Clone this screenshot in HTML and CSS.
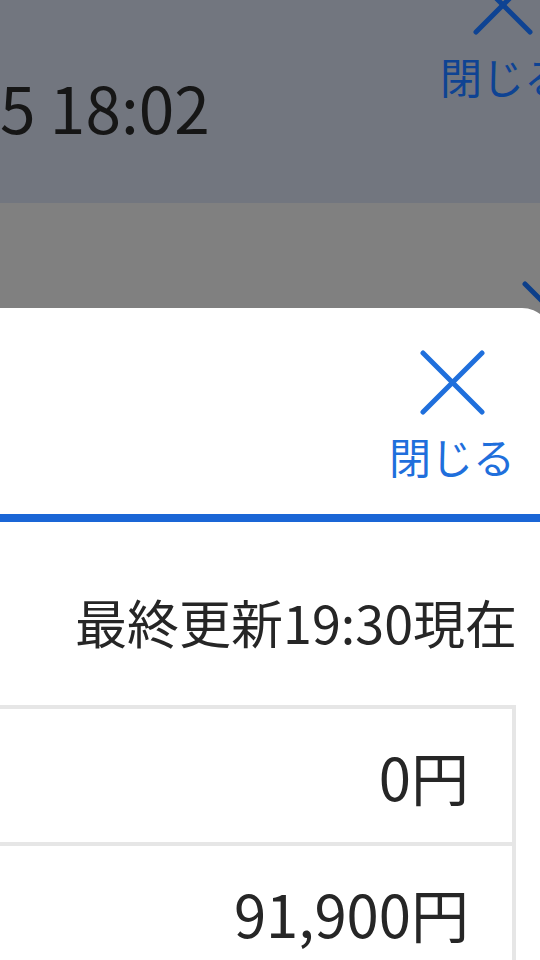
FILE: index.html
```html
<!DOCTYPE html>
<html lang="ja">
<head>
<meta charset="utf-8">
<title>最終更新</title>
<link rel="stylesheet" href="styles.css">
</head>
<body>
<div class="screen">
  <header class="backdrop-head">
    <div class="time">5 18:02</div>
    <div class="close close-dim">
      <svg class="x-icon x-dim" viewBox="0 0 60 60" aria-hidden="true">
        <line x1="3" y1="3" x2="57" y2="57"/>
        <line x1="57" y1="3" x2="3" y2="57"/>
      </svg>
      <span class="close-label">閉じる</span>
    </div>
  </header>
  <div class="backdrop-band">
    <svg class="chevron" viewBox="0 0 40 40" aria-hidden="true">
      <polyline points="3,3 22,22 41,3"/>
    </svg>
  </div>
  <section class="sheet">
    <div class="sheet-head">
      <div class="close">
        <svg class="x-icon" viewBox="0 0 65 65" aria-hidden="true">
          <line x1="3" y1="3" x2="62" y2="62"/>
          <line x1="62" y1="3" x2="3" y2="62"/>
        </svg>
        <span class="close-label">閉じる</span>
      </div>
    </div>
    <div class="bar"></div>
    <p class="updated">最終更新19:30現在</p>
    <div class="table">
      <div class="row"><span class="value">0円</span></div>
      <div class="row"><span class="value">91,900円</span></div>
    </div>
  </section>
</div>
</body>
</html>
```
FILE: styles.css
```css
* { box-sizing: border-box; }
html, body {
  margin: 0;
  padding: 0;
  width: 540px;
  height: 960px;
  overflow: hidden;
  background: #808080;
  font-family: "Noto Sans CJK JP", "Noto Sans", sans-serif;
}
.screen {
  width: 540px;
  height: 960px;
  overflow: hidden;
  display: flex;
  flex-direction: column;
}
.backdrop-head {
  height: 203px;
  flex: none;
  background: #72767f;
  display: flex;
  justify-content: space-between;
  align-items: flex-start;
}
.time {
  margin-top: 74px;
  font-size: 64px;
  line-height: 64px;
  color: #161616;
  white-space: nowrap;
}
.close {
  display: flex;
  flex-direction: column;
  align-items: center;
  gap: 20px;
  width: 126px;
}
.close-dim {
  margin-top: -25px;
  margin-right: -26px;
}
.x-icon {
  width: 65px;
  height: 65px;
  display: block;
  stroke: #1f6fdc;
  stroke-width: 5;
  stroke-linecap: round;
  fill: none;
}
.x-dim {
  width: 60px;
  height: 60px;
  stroke: #0e4393;
}
.close-label {
  font-size: 42px;
  line-height: 42px;
  color: #1f6fdc;
  white-space: nowrap;
}
.close-dim .close-label { color: #0e4393; }
.backdrop-band {
  height: 105px;
  flex: none;
  background: #808080;
  display: flex;
  justify-content: flex-end;
  align-items: flex-start;
}
.chevron {
  width: 40px;
  height: 40px;
  margin-top: 78px;
  margin-right: -22px;
  stroke: #0d3f8a;
  stroke-width: 5;
  stroke-linecap: round;
  fill: none;
  display: block;
}
.sheet {
  flex: 1;
  width: 552px;
  margin-right: -12px;
  background: #ffffff;
  border-top-right-radius: 30px;
  display: flex;
  flex-direction: column;
}
.sheet-head {
  height: 206px;
  flex: none;
  padding: 42px 37px 0 0;
  display: flex;
  justify-content: flex-end;
  align-items: flex-start;
}
.bar {
  height: 8px;
  flex: none;
  background: #1a66d6;
}
.updated {
  margin: 74px 35px 0 0;
  font-size: 52px;
  line-height: 52px;
  color: #262626;
  text-align: right;
  white-space: nowrap;
}
.table {
  margin: 57px 36px 0 -20px;
  border: 4px solid #e6e6e6;
}
.row {
  height: 133px;
  display: flex;
  justify-content: flex-end;
  align-items: center;
  padding-right: 43px;
}
.row + .row { border-top: 4px solid #e6e6e6; height: 137px; }
.value {
  font-size: 58px;
  line-height: 58px;
  color: #262626;
  white-space: nowrap;
}
```
